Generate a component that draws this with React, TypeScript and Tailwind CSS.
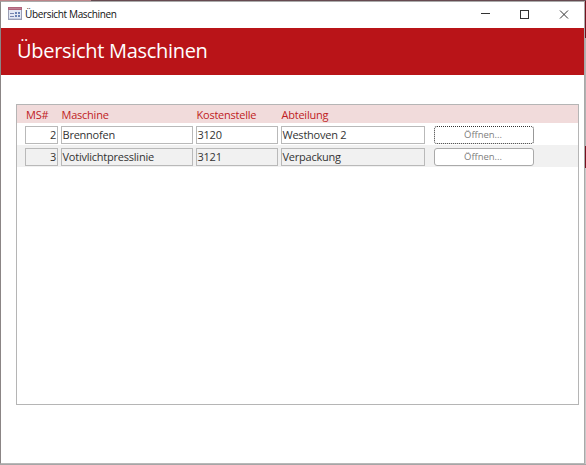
import React from "react";

type Machine = { id: number; name: string; costCenter: string; department: string };

const machines: Machine[] = [
  { id: 2, name: "Brennofen", costCenter: "3120", department: "Westhoven 2" },
  { id: 3, name: "Votivlichtpresslinie", costCenter: "3121", department: "Verpackung" },
];

const columns = "grid grid-cols-[33px_132px_82px_144px_100px] pl-2";

function FormIcon() {
  return (
    <svg width="14" height="13" viewBox="0 0 14 13" shapeRendering="crispEdges">
      <rect width="14" height="13" fill="#9a9eb4" />
      <rect x="1" y="3" width="12" height="9" fill="#e3e8f4" />
      <rect width="14" height="3" fill="#b0647c" />
      <rect x="1" y="1" width="12" height="1" fill="#c07f93" />
      <path d="M2 6.5h4M2 9.5h4" stroke="#7886b1" />
      <path d="M7 5h2v2H7zM10 5h2v2h-2zM7 8h2v2H7zM10 8h2v2h-2z" fill="#6a82b4" />
      <path d="M1 11.5h12" stroke="#c3cce2" />
    </svg>
  );
}

function Field({ value, shaded, right = false }: { value: string | number; shaded: boolean; right?: boolean }) {
  return (
    <div className={`flex h-[18px] items-center border border-[#b9b9b9] text-[#333] ${shaded ? "bg-[#f1f1f1]" : "bg-white"} ${right ? "justify-end pr-px" : "pl-[0.5px]"}`}>
      <span>{value}</span>
    </div>
  );
}

export default function App() {
  return (
    <div className="flex h-[465px] w-[586px] flex-col overflow-hidden bg-[#a6a6a6] font-['Open_Sans','Noto_Sans',sans-serif]">
      <div className="flex h-px shrink-0">
        <div className="w-[91px] bg-[#bd8489]" />
        <div className="flex-1 bg-[#654a50]" />
      </div>
      <div className="flex h-[463px] shrink-0">
        <main className="flex w-[585px] flex-col border border-t-[#aaa] border-r-[#a9a9a9] border-b-[#b8b8b8] border-l-[#8b8585] bg-white">
          <header className="flex h-[26px] shrink-0 items-start pl-[7px]">
            <div className="pt-[5px]"><FormIcon /></div>
            <span className="ml-[3px] whitespace-nowrap pt-[5px] text-[10px] leading-[14px] tracking-[-0.35px] text-[#111]">Übersicht Maschinen</span>
            <div className="ml-auto flex items-center pt-[6px] pr-[14px]">
              <svg width="90" height="12" viewBox="0 0 90 12" fill="none" stroke="#333">
                <path d="M1 5.5h9M40.5 2.5h8v8h-8z" shapeRendering="crispEdges" />
                <path d="m80 2.5 8 8m0-8-8 8" />
              </svg>
            </div>
          </header>
          <div className="flex h-[47px] shrink-0 items-center bg-[#b91418] pb-0.5 pl-4">
            <h1 className="whitespace-nowrap text-[20px] leading-7 tracking-[-0.3px] text-white">Übersicht Maschinen</h1>
          </div>
          <section className="mt-[29px] ml-[15px] h-[301px] w-[563px] border border-[#b5b5b5] text-[11px] leading-4 tracking-[-0.23px]">
            <div className={`${columns} h-[18px] items-center gap-x-[3px] bg-[#f1dbdb] pt-px font-medium text-[#c01c24]`}>
              <span className="pl-px">MS#</span>
              <span className="pl-[0.5px]">Maschine</span>
              <span className="pl-[0.5px]">Kostenstelle</span>
              <span className="pl-[0.5px]">Abteilung</span>
            </div>
            {machines.map((machine, index) => (
              <div key={machine.id} className={`${columns} h-[22px] items-end gap-x-[3px] pb-px ${index === 1 ? "bg-[#f1f1f1]" : "bg-white"}`}>
                <Field value={machine.id} shaded={index === 1} right />
                <Field value={machine.name} shaded={index === 1} />
                <Field value={machine.costCenter} shaded={index === 1} />
                <Field value={machine.department} shaded={index === 1} />
                <button className={`ml-1.5 flex h-[18px] w-[100px] items-center justify-center rounded-[3px] border bg-white pr-0.5 text-[9.5px] tracking-[-0.05px] text-[#808080] ${index === 0 ? "border-dotted border-[#333]" : "border-[#aaa]"}`}>
                  Öffnen...
                </button>
              </div>
            ))}
          </section>
        </main>
        <aside className="w-px">
          <div className="h-[37px] bg-[#73121e]" />
          <div className="h-[108px] bg-[#b1b1b1]" />
          <div className="h-[22px] bg-[#78101f]" />
          <div className="h-[296px] bg-[#c9c9c9]" />
        </aside>
      </div>
    </div>
  );
}
